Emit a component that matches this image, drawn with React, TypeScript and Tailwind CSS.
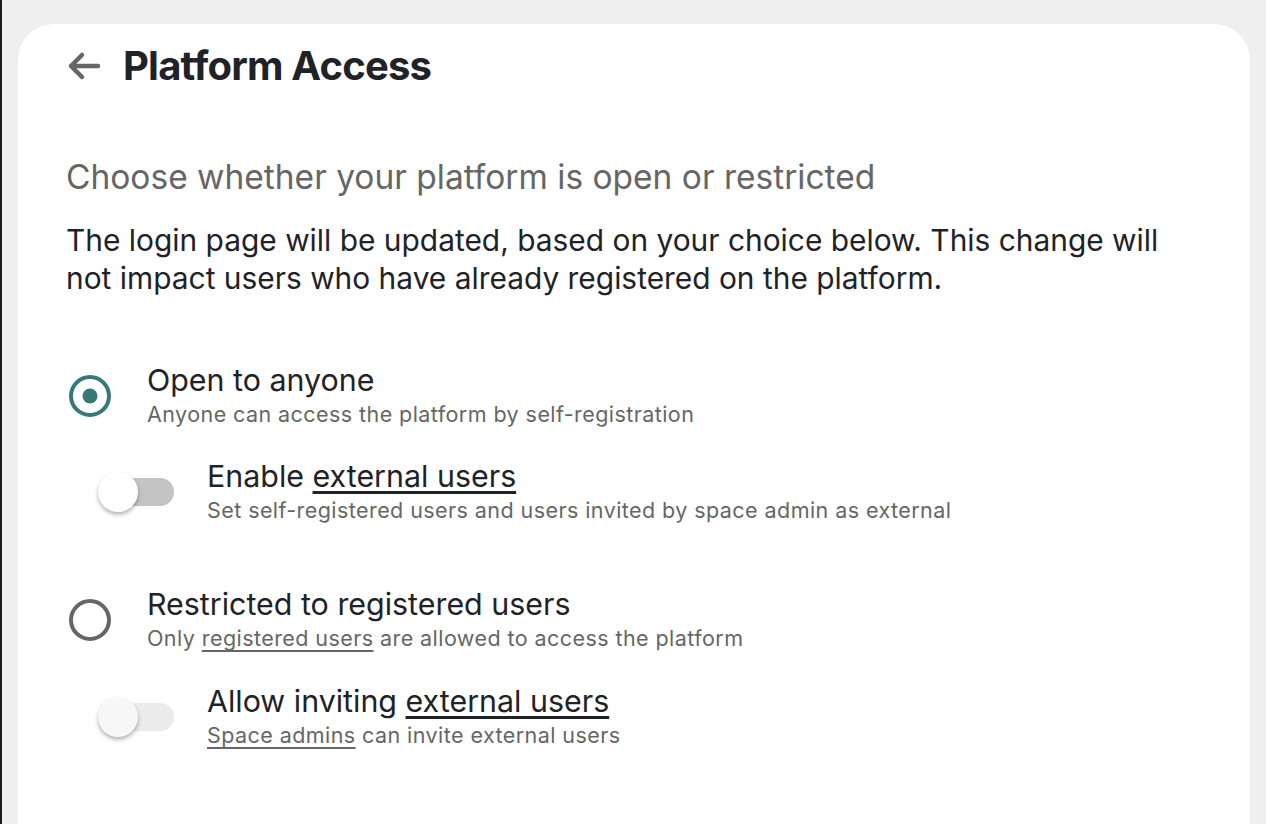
function Radio({ checked }: { checked: boolean }) {
  return (
    <svg width="48" height="48" viewBox="0 0 48 48" className="shrink-0">
      <circle
        cx="24"
        cy="24"
        r="19"
        fill="none"
        stroke={checked ? "#357a78" : "#666666"}
        strokeWidth="4"
      />
      {checked && <circle cx="24" cy="24" r="7.5" fill="#357a78" />}
    </svg>
  );
}

function Toggle({ disabled }: { disabled?: boolean }) {
  return (
    <div className="relative h-[44px] w-[78px] shrink-0">
      <div
        className={
          "absolute left-[8px] top-[8px] h-[28px] w-[68px] rounded-full " +
          (disabled ? "bg-[#ebebeb]" : "bg-[#c4c4c4]")
        }
      />
      <div
        className={
          "absolute left-0 top-[2px] h-[40px] w-[40px] rounded-full shadow-[0_3px_5px_rgba(0,0,0,0.2),0_2px_3px_rgba(0,0,0,0.12)] " +
          (disabled ? "bg-[#f7f7f7]" : "bg-white")
        }
      />
    </div>
  );
}

const label = "text-[30.4px] leading-[36px] text-[#1f2328]";
const hint = "text-[21.5px] leading-[32px] tracking-[0.02em] text-[#666666]";

export default function App() {
  return (
    <div className="flex h-[824px] w-[1266px] overflow-hidden bg-[#efefef] font-['Inter',sans-serif]">
      <div className="w-[2px] shrink-0 bg-[#1c1b14]" />
      <div className="ml-[16px] mt-[24px] w-[1232px] rounded-t-[36px] bg-white pl-[48px] pr-[48px]">
        <div className="mt-[18px] flex items-center gap-[20px]">
          <svg width="40" height="40" viewBox="0 0 40 40" className="-ml-[3px]">
            <path
              d="M35 20H8M19 9L8 20l11 11"
              fill="none"
              stroke="#666666"
              strokeWidth="4.5"
              strokeLinecap="round"
              strokeLinejoin="round"
            />
          </svg>
          <h1 className="text-[40px] font-bold leading-[48px] tracking-[-0.02em] text-[#1f2328]">
            Platform Access
          </h1>
        </div>

        <h2 className="mt-[67px] text-[33.5px] leading-[1.2] text-[#666666]">
          Choose whether your platform is open or restricted
        </h2>
        <p className="mt-[24px] w-[1120px] text-[29.9px] leading-[38px] text-[#1f2328]">
          The login page will be updated, based on your choice below. This change will not impact
          users who have already registered on the platform.
        </p>

        <div className="mt-[65px] flex items-center gap-[33px]">
          <Radio checked />
          <div>
            <div className={label}>Open to anyone</div>
            <div className={hint}>Anyone can access the platform by self-registration</div>
          </div>
        </div>

        <div className="ml-[32px] mt-[28px] flex items-center gap-[31px]">
          <Toggle />
          <div>
            <div className={label}>
              Enable <span className="underline underline-offset-[4px]">external users</span>
            </div>
            <div className={hint}>
              Set self-registered users and users invited by space admin as external
            </div>
          </div>
        </div>

        <div className="mt-[60px] flex items-center gap-[33px]">
          <Radio checked={false} />
          <div>
            <div className={label}>Restricted to registered users</div>
            <div className={hint}>
              Only <span className="underline underline-offset-[4px]">registered users</span> are
              allowed to access the platform
            </div>
          </div>
        </div>

        <div className="ml-[32px] mt-[29px] flex items-center gap-[31px]">
          <Toggle disabled />
          <div>
            <div className={label}>
              Allow inviting <span className="underline underline-offset-[4px]">external users</span>
            </div>
            <div className={hint}>
              <span className="underline underline-offset-[4px]">Space admins</span> can invite
              external users
            </div>
          </div>
        </div>
      </div>
    </div>
  );
}
